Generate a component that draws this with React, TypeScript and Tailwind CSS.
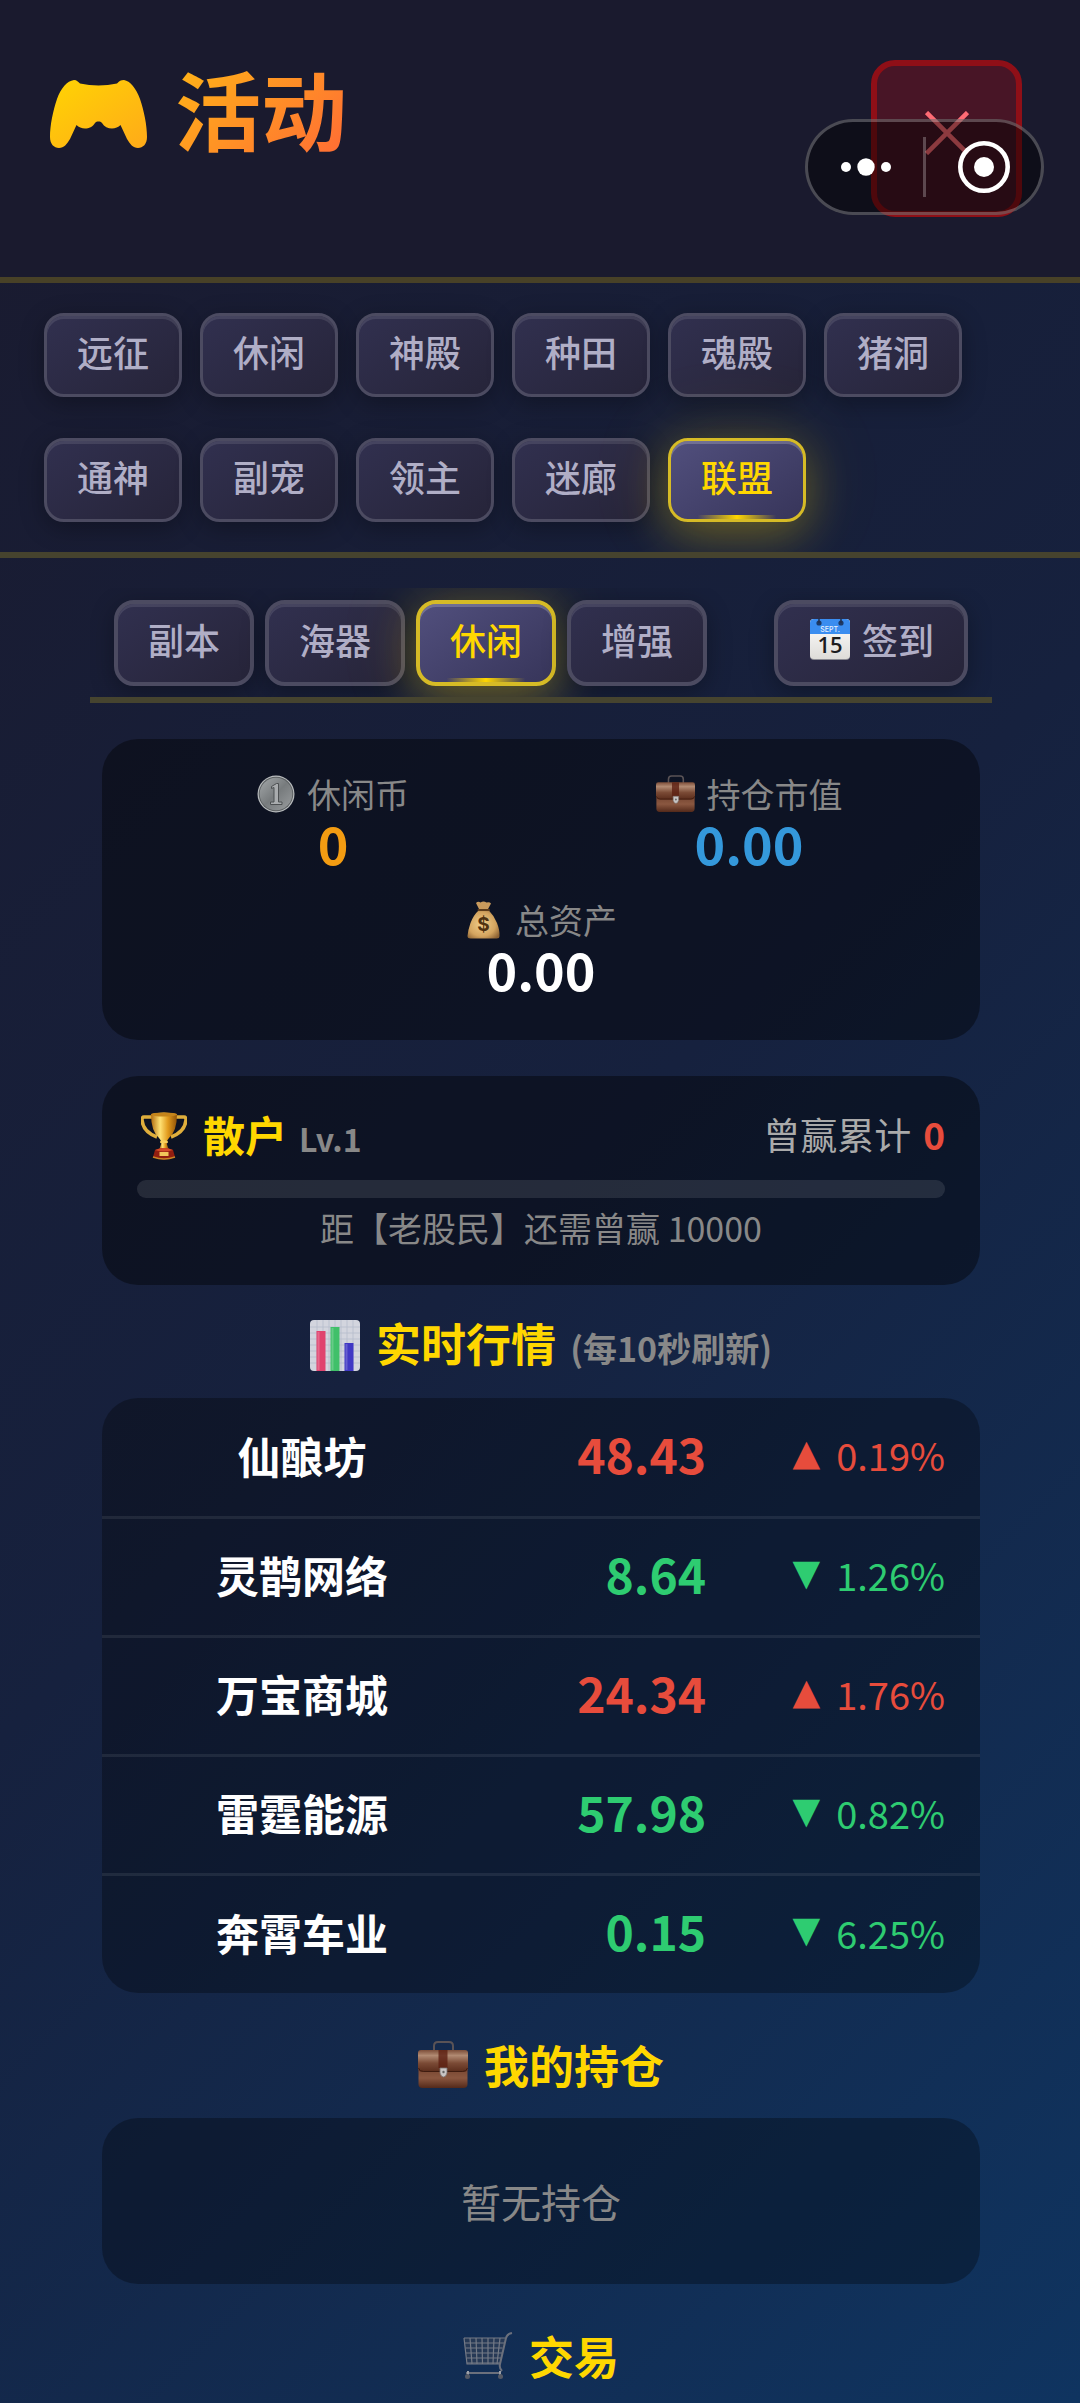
import React from "react";

const mainTabs = ["远征", "休闲", "神殿", "种田", "魂殿", "猪洞", "通神", "副宠", "领主", "迷廊", "联盟"];
const subTabs = ["副本", "海器", "休闲", "增强"];

const stocks = [
  { name: "仙酿坊", price: "48.43", change: "0.19%", up: true },
  { name: "灵鹊网络", price: "8.64", change: "1.26%", up: false },
  { name: "万宝商城", price: "24.34", change: "1.76%", up: true },
  { name: "雷霆能源", price: "57.98", change: "0.82%", up: false },
  { name: "奔霄车业", price: "0.15", change: "6.25%", up: false },
];

function GamepadIcon() {
  return (
    <svg viewBox="0 0 97 68" className="mt-3 h-[68px] w-[97px]" aria-hidden="true">
      <defs>
        <linearGradient id="pad" x1="0" y1="0" x2="1" y2="1">
          <stop offset="0" stopColor="#ffd403" />
          <stop offset="1" stopColor="#ffaa19" />
        </linearGradient>
      </defs>
      <path
        fill="url(#pad)"
        d="M24 0C27 0 28 2 30 3.500C42 6 55 6 67 3.500C69 1 71 0 74 0C80 1 86 8 90 19C94 31 97 45 97 57C97 64 93 68 88 68C83 68 80 64 77 59L70.500 45C66 50 56 50 52 43C51 41.500 50 41.500 48.500 41.500C47 41.500 46 41.500 45 43C41 50 31 50 26.500 45L20 59C17 64 14 68 9 68C4 68 0 64 0 57C0 45 3 31 7 19C11 8 17 1 24 0Z"
      />
    </svg>
  );
}

function CalendarIcon() {
  return (
    <svg viewBox="0 0 42 42" className="h-[42px] w-[42px]" aria-hidden="true">
      <defs>
        <linearGradient id="calPage" x1="0" y1="0" x2="0" y2="1">
          <stop offset="0" stopColor="#ffffff" />
          <stop offset="1" stopColor="#dedcd8" />
        </linearGradient>
      </defs>
      <rect x="2" y="1" width="40" height="41" rx="4" fill="#8b8b92" />
      <rect x="2" y="1" width="40" height="40" rx="4" fill="url(#calPage)" />
      <path d="M2 16V5a4 4 0 0 1 4-4h32a4 4 0 0 1 4 4v11z" fill="#3a8df0" />
      <circle cx="11" cy="5" r="2.600" fill="#1c3a68" />
      <circle cx="33" cy="5" r="2.600" fill="#1c3a68" />
      <path d="M11 5V0M33 5V0" stroke="#23304e" strokeWidth="1.500" />
      <text x="22" y="14" textAnchor="middle" fontSize="7" fill="#e8f1ff" fontFamily="Inter, sans-serif">SEPT.</text>
      <text x="22" y="35" textAnchor="middle" fontSize="22" fontWeight="600" fill="#1c1c1e" fontFamily="Open Sans, sans-serif">15</text>
    </svg>
  );
}

function CoinIcon() {
  return (
    <svg viewBox="0 0 38 38" className="h-[38px] w-[38px]" aria-hidden="true">
      <defs>
        <linearGradient id="coin" x1="0" y1="0" x2="1" y2="1">
          <stop offset="0" stopColor="#a4a8aa" />
          <stop offset="0.500" stopColor="#777b7d" />
          <stop offset="1" stopColor="#9a9d9f" />
        </linearGradient>
      </defs>
      <circle cx="19" cy="19" r="18.500" fill="#b9bcbe" />
      <circle cx="19" cy="19" r="17.300" fill="#5c6062" />
      <circle cx="19" cy="19" r="16.300" fill="url(#coin)" />
      <path d="M14.500 11.500L19.500 8.500H21.500V27H25V29.500H13.500V27H17V12.500L14.500 13.500Z" fill="#a9acae" stroke="#4d5052" strokeWidth="1" />
    </svg>
  );
}

function BriefcaseIcon({ large = false }: { large?: boolean }) {
  return (
    <svg viewBox="0 0 50 48" className={large ? "h-[48px] w-[50px]" : "h-[38px] w-[39px]"} aria-hidden="true">
      <defs>
        <linearGradient id="flap" x1="0" y1="0" x2="0" y2="1">
          <stop offset="0" stopColor="#7d4e39" />
          <stop offset="0.250" stopColor="#b18a72" />
          <stop offset="0.600" stopColor="#7a4a35" />
          <stop offset="1" stopColor="#5a2c1b" />
        </linearGradient>
        <linearGradient id="caseBody" x1="0" y1="0" x2="0" y2="1">
          <stop offset="0" stopColor="#6c3d2a" />
          <stop offset="0.600" stopColor="#8a5740" />
          <stop offset="1" stopColor="#53291a" />
        </linearGradient>
      </defs>
      <path d="M16 10V5q0-4 4-4h11q4 0 4 4v5" fill="none" stroke="#5a5356" strokeWidth="2" />
      <rect x="0.500" y="22" width="49" height="25" rx="4" fill="url(#caseBody)" />
      <path d="M0 12q0-3 3-3h44q3 0 3 3v15q0 4-5 4H5q-5 0-5-4z" fill="url(#flap)" />
      <path d="M0.500 27q1 3.500 5 3.500h39q4 0 5-3.500" fill="none" stroke="#3f1c10" strokeWidth="1" />
      <rect x="20.500" y="9" width="9" height="18" fill="#5d1f12" opacity="0.800" />
      <path d="M22 27h7v5q-1 4-3.500 4T22 32z" fill="#c9c6c5" stroke="#7c7472" strokeWidth="0.800" />
      <circle cx="25.500" cy="31" r="1.200" fill="#666" />
    </svg>
  );
}

function MoneyBagIcon() {
  return (
    <svg viewBox="0 0 38 38" className="h-[38px] w-[38px]" aria-hidden="true">
      <defs>
        <radialGradient id="bag" cx="0.450" cy="0.500" r="0.650">
          <stop offset="0" stopColor="#f3cf8b" />
          <stop offset="0.650" stopColor="#d3a45f" />
          <stop offset="1" stopColor="#8c6233" />
        </radialGradient>
      </defs>
      <path d="M11 2q2-2 4.500-.5Q18.500-.5 21.500 1.500q3-1 4.500 1L22.500 9h-8z" fill="#c99a5c" />
      <path d="M14 9h9.500q5.500 5.500 8.500 13 3 8 2.500 13 0 2.500-3 2.500h-26q-3 0-3-2.500Q3 29 5.500 22 8.500 14 14 9z" fill="url(#bag)" />
      <path d="M13.500 9h10.500" stroke="#5c3c1b" strokeWidth="2" strokeLinecap="round" />
      <text x="18.500" y="30" textAnchor="middle" fontSize="19" fontWeight="700" fill="#4f3210" fontFamily="Inter, sans-serif">$</text>
    </svg>
  );
}

function TrophyIcon() {
  return (
    <svg viewBox="0 0 46 48" className="h-[48px] w-[46px]" aria-hidden="true">
      <defs>
        <linearGradient id="cup" x1="0" y1="0" x2="1" y2="0">
          <stop offset="0" stopColor="#b26c10" />
          <stop offset="0.350" stopColor="#ffe173" />
          <stop offset="0.650" stopColor="#e19a1c" />
          <stop offset="1" stopColor="#8f5208" />
        </linearGradient>
      </defs>
      <path d="M11 5H3q-2 0-2 3 1 12 15 17M35 5h8q2 0 2 3-1 12-15 17" fill="none" stroke="#dfae3c" strokeWidth="3.500" />
      <path d="M10 2q13-3 26 0 0 17-8 24-3 3-3 8h-4q0-5-3-8-8-7-8-24z" fill="url(#cup)" />
      <ellipse cx="23" cy="2.500" rx="13" ry="2" fill="#c5851b" />
      <ellipse cx="23" cy="30" rx="4" ry="1.800" fill="#f7cf5c" />
      <path d="M20.500 31h5l2 6h-9z" fill="url(#cup)" />
      <path d="M14 38q9-4 18 0l2 7q-11 5-22 0z" fill="#931e10" />
      <path d="M14 38q9-4 18 0-9 3-18 0z" fill="#d24a28" />
      <rect x="18.500" y="40" width="9" height="4" fill="#f1c65a" />
      <path d="M12 45q11 4 22 0" stroke="#c98324" strokeWidth="1.500" fill="none" />
    </svg>
  );
}

function ChartIcon() {
  const lines = [6, 12, 18, 24, 30, 36, 42];
  return (
    <svg viewBox="0 0 50 51" className="h-[51px] w-[50px]" aria-hidden="true">
      <rect width="50" height="51" rx="4" fill="#d3d5de" />
      {lines.map((p) => (
        <path key={p} d={`M0 ${p + 1}H50M${p + 1} 0V51`} stroke="#b6bccb" strokeWidth="0.800" />
      ))}
      <rect x="6.500" y="11" width="9" height="40" fill="#e0436e" />
      <rect x="20.500" y="7" width="9" height="44" fill="#40c069" />
      <rect x="34.500" y="23" width="9" height="28" fill="#4038c4" />
      <path d="M8.500 12V50M22.500 8V50M36.500 24V50" stroke="#fff" strokeOpacity="0.200" strokeWidth="2" />
    </svg>
  );
}

function CartIcon() {
  return (
    <svg viewBox="0 0 50 48" className="h-[48px] w-[50px]" aria-hidden="true">
      <path d="M1 6h42l-6 26H4z" fill="#3c4558" fillOpacity="0.500" />
      <g fill="none" stroke="#747a86" strokeWidth="1.200">
        <path d="M1 6h41M2 11h39M2.500 16h37M3 21h36M4 26h34M4 31h33" />
        <path d="M1 6l3 26h33M7 6l2 26M13 6l1 26M19 6l.5 26M25 6v26M31 6l-1 26M37 6l-3 26" />
        <path d="M49 1q-5 1-6 5l-6 26q-1 4 2 7M3 41h35" strokeWidth="2" stroke="#6b707c" />
        <path d="M5 39v4M37 39v4" stroke="#9da1aa" strokeWidth="2" />
      </g>
      <circle cx="4.500" cy="44.500" r="2.500" fill="#555a66" />
      <circle cx="37.500" cy="44.500" r="2.500" fill="#555a66" />
    </svg>
  );
}

function TabButton({ label, active, sub, icon }: { label: string; active?: boolean; sub?: boolean; icon?: React.ReactNode }) {
  const size = sub ? "h-[86px] border-4 px-[30px]" : "h-[84px] border-3 px-[30px]";
  const look = active
    ? "border-[#d6bb26] bg-[linear-gradient(145deg,#514f7d,#37355a)] text-[#ffd700] shadow-[0_12px_45px_rgba(255,215,0,0.3),0_0_90px_rgba(255,215,0,0.12),inset_0_3px_0_rgba(255,255,255,0.2)]"
    : "border-[#4c4b61] bg-[linear-gradient(145deg,#31304f,#262439)] text-[#b0aec6] shadow-[0_6px_24px_rgba(0,0,0,0.3),inset_0_3px_0_rgba(255,255,255,0.1)]";
  return (
    <button
      type="button"
      aria-pressed={!!active}
      className={`relative flex items-center gap-3 rounded-[20px] pb-2 text-[36px] leading-[48px] font-medium whitespace-nowrap ${size} ${look}`}
    >
      {icon}
      {label}
      {active && (
        <span className="absolute bottom-0 left-1/2 h-[4px] w-3/5 -translate-x-1/2 bg-[linear-gradient(90deg,transparent,#ffd700,transparent)]" />
      )}
    </button>
  );
}

function Stat({ icon, label, value, color, wide }: { icon: React.ReactNode; label: string; value: string; color: string; wide?: boolean }) {
  return (
    <div className={`flex flex-col items-center pb-1 ${wide ? "col-span-2" : ""}`}>
      <dt className="flex h-[42px] items-center gap-3 text-[34px] leading-[42px] text-[#888888]">
        {icon}
        {label}
      </dt>
      <dd className={`text-[52px] leading-[56px] font-bold ${color}`}>{value}</dd>
    </div>
  );
}

export default function App() {
  return (
    <div className="relative min-h-screen bg-[linear-gradient(135deg,#1a1a2e_0%,#16213e_50%,#0f3460_100%)] font-['Noto_Sans_CJK_SC',sans-serif] text-white">
      <header className="flex items-start justify-between border-b-6 border-[#484127] bg-[#1a1a2e] py-[60px] pr-[58px] pl-[50px]">
        <h1 className="flex items-center gap-7 text-[86px] leading-[96px] font-bold">
          <GamepadIcon />
          <span className="bg-[linear-gradient(135deg,#ffb616,#ff6b35)] bg-clip-text text-transparent">活动</span>
        </h1>
        <button
          type="button"
          aria-label="关闭"
          className="flex h-[157px] w-[151px] items-center justify-center rounded-[24px] border-6 border-[#8f0f17] bg-[#481526] pb-3"
        >
          <svg viewBox="0 0 44 44" className="h-[44px] w-[44px]" aria-hidden="true">
            <path d="M1.500 1.500L42.500 42.500M42.500 1.500L1.500 42.500" stroke="#ff6b74" strokeWidth="4.500" />
          </svg>
        </button>
      </header>

      <div className="absolute top-[119px] right-[36px] flex h-[96px] w-[239px] items-center rounded-full border-3 border-white/25 bg-black/45">
        <button type="button" aria-label="更多" className="flex h-full flex-1 items-center justify-center">
          <svg viewBox="0 0 50 18" className="h-[18px] w-[50px]" fill="#fff" aria-hidden="true">
            <circle cx="5" cy="9" r="5" />
            <circle cx="25" cy="9" r="8.700" />
            <circle cx="45" cy="9" r="5" />
          </svg>
        </button>
        <span className="h-[60px] w-[3px] bg-white/25" />
        <button type="button" aria-label="返回" className="flex h-full flex-1 items-center justify-center">
          <svg viewBox="0 0 52 52" className="h-[52px] w-[52px]" aria-hidden="true">
            <circle cx="26" cy="26" r="23.700" fill="none" stroke="#fff" strokeWidth="4.600" />
            <circle cx="26" cy="26" r="10" fill="#fff" />
          </svg>
        </button>
      </div>

      <nav className="flex flex-wrap gap-x-[18px] gap-y-[41px] overflow-hidden border-b-6 border-[#46432e] px-[44px] py-[30px]">
        {mainTabs.map((t) => (
          <TabButton key={t} label={t} active={t === "联盟"} />
        ))}
      </nav>

      <main className="mr-[88px] ml-[90px] pt-[30px]">
        <nav className="flex justify-center gap-[11px] overflow-hidden border-b-6 border-[#46442f] pt-3 pb-[11px]">
          {subTabs.map((t) => (
            <TabButton key={t} sub label={t} active={t === "休闲"} />
          ))}
          <div className="ml-[56px]">
            <TabButton sub label="签到" icon={<CalendarIcon />} />
          </div>
        </nav>

        <div className="px-3">
          <dl className="mt-9 grid grid-cols-2 gap-6 rounded-[36px] bg-black/40 px-[35px] pt-[34px] pb-[39px]">
            <Stat icon={<CoinIcon />} label="休闲币" value="0" color="text-[#f39c12]" />
            <Stat icon={<BriefcaseIcon />} label="持仓市值" value="0.00" color="text-[#3498db]" />
            <Stat icon={<MoneyBagIcon />} label="总资产" value="0.00" color="text-white" wide />
          </dl>

          <section className="mt-9 rounded-[36px] bg-black/40 px-[35px] pt-[30px] pb-[33px]">
            <div className="flex h-[60px] items-center justify-between">
              <div className="flex items-center gap-4 pl-1 font-bold">
                <TrophyIcon />
                <span className="flex items-baseline gap-3 leading-[60px]">
                  <span className="text-[42px] text-[#ffd700]">散户</span>
                  <span className="text-[32px] text-[#888888]">Lv.1</span>
                </span>
              </div>
              <div className="flex gap-3 pb-1 text-[37px] leading-[60px] text-[#aaaaaa]">
                曾赢累计 <b className="text-[#e74c3c]">0</b>
              </div>
            </div>
            <div role="progressbar" aria-label="曾赢累计" aria-valuenow={0} aria-valuemin={0} aria-valuemax={10000} className="mt-[14px] h-[18px] rounded-full bg-white/10" />
            <p className="mt-[6px] text-center text-[34px] leading-[48px] text-[#888888]">距【老股民】还需曾赢 10000</p>
          </section>

          <h2 className="mt-[30px] mb-[23px] flex h-[60px] items-center justify-center gap-4 text-[45px] leading-[60px] font-bold text-[#ffd700]">
            <ChartIcon />
            <span>
              实时行情 <span className="ml-1 text-[34px] text-[#888888]">(每10秒刷新)</span>
            </span>
          </h2>
          <div className="overflow-hidden rounded-[36px] bg-black/30">
            <table className="w-full table-fixed border-collapse">
              <colgroup>
                <col className="w-[41.600%]" />
                <col className="w-[27.200%]" />
                <col className="w-[31.200%]" />
              </colgroup>
              <tbody>
                {stocks.map((s) => (
                  <tr key={s.name} className="h-[119px] border-b-3 border-white/8 last:border-b-0">
                    <th scope="row" className="pb-1 pl-[35px] text-center text-[43px] font-bold">{s.name}</th>
                    <td className={`pb-2 text-right text-[48px] font-bold ${s.up ? "text-[#e74c3c]" : "text-[#2ecc71]"}`}>{s.price}</td>
                    <td className={`pr-[35px] pb-1 text-[38px] ${s.up ? "text-[#e74c3c]" : "text-[#2ecc71]"}`}>
                      <span className="flex items-center justify-end gap-4">
                        <span className="pb-1 font-['DejaVu_Sans'] text-[36px] leading-none">{s.up ? "▲" : "▼"}</span>
                        {s.change}
                      </span>
                    </td>
                  </tr>
                ))}
              </tbody>
            </table>
          </div>

          <h2 className="mt-[42px] mb-[23px] flex h-[60px] items-center justify-center gap-4 text-[45px] leading-[60px] font-bold text-[#ffd700]">
            <BriefcaseIcon large />
            我的持仓
          </h2>
          <p className="rounded-[36px] bg-black/30 py-[53px] text-center text-[40px] leading-[60px] text-[#888888]">暂无持仓</p>

          <h2 className="mt-[42px] flex h-[60px] items-center justify-center gap-4 text-[45px] leading-[60px] font-bold text-[#ffd700]">
            <CartIcon />
            交易
          </h2>
        </div>
      </main>
    </div>
  );
}
